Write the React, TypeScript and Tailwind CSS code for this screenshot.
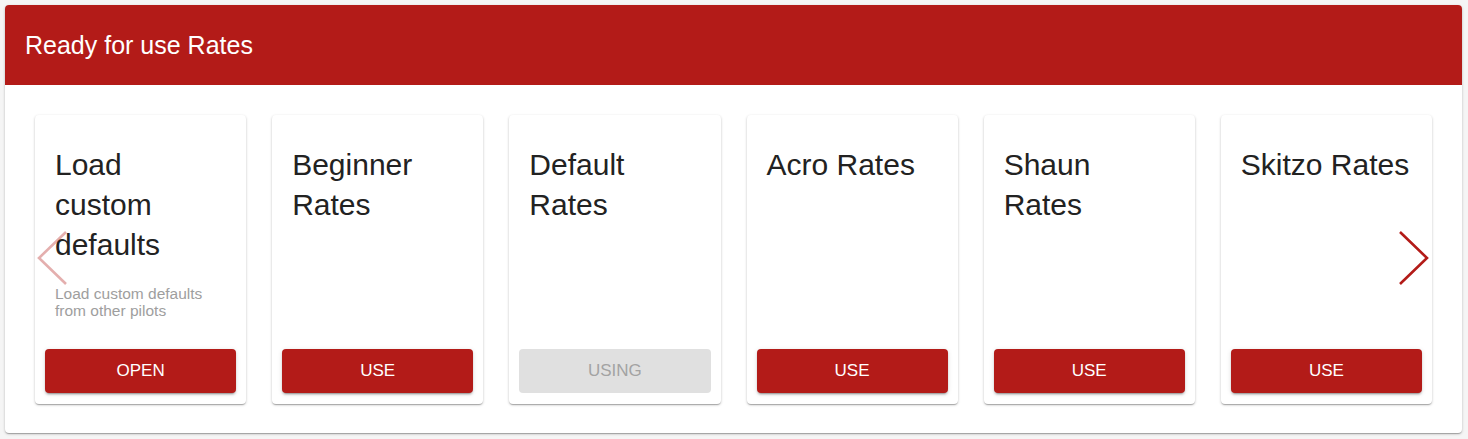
import React from "react";

type Item = { title: string; desc?: string; label: string; active?: boolean };

const items: Item[] = [
  { title: "Load custom defaults", desc: "Load custom defaults from other pilots", label: "OPEN" },
  { title: "Beginner Rates", label: "USE" },
  { title: "Default Rates", label: "USING", active: true },
  { title: "Acro Rates", label: "USE" },
  { title: "Shaun Rates", label: "USE" },
  { title: "Skitzo Rates", label: "USE" },
];

function Card({ item }: { item: Item }) {
  return (
    <div className="flex h-[289px] flex-col rounded-[4px] bg-white shadow-[0_1px_3px_rgba(0,0,0,0.2),0_1px_1px_rgba(0,0,0,0.14),0_2px_1px_-1px_rgba(0,0,0,0.12)]">
      <div className="flex-1 pl-[20px] pr-[22px] pt-[30px]">
        <div className="text-[30px] leading-[40px] text-[#222]">{item.title}</div>
        {item.desc && (
          <div className="mt-[20px] text-[15.5px] leading-[17px] text-[#9e9e9e]">{item.desc}</div>
        )}
      </div>
      <div className="px-[10px] pb-[11px]">
        {item.active ? (
          <div className="flex h-[44px] items-center justify-center rounded-[4px] bg-[#e0e0e0] text-[17px] text-[#a3a3a3]">
            {item.label}
          </div>
        ) : (
          <div className="flex h-[44px] items-center justify-center rounded-[4px] bg-[#b31b18] text-[17px] text-white shadow-[0_3px_1px_-2px_rgba(0,0,0,0.2),0_2px_2px_0_rgba(0,0,0,0.14),0_1px_5px_0_rgba(0,0,0,0.12)]">
            {item.label}
          </div>
        )}
      </div>
    </div>
  );
}

export default function App() {
  return (
    <div
      className="h-[439px] w-[1468px] bg-[#f5f5f5] pt-[5px]"
      style={{ fontFamily: '"Liberation Sans", Arial, sans-serif' }}
    >
      <div className="ml-[5px] w-[1457px] overflow-hidden rounded-[4px] bg-white shadow-[0_1px_3px_rgba(0,0,0,0.2),0_1px_1px_rgba(0,0,0,0.14),0_2px_1px_-1px_rgba(0,0,0,0.12)]">
        <div className="flex h-[80px] items-center bg-[#b31b18] px-[20px] pt-[1px] text-[25px] text-white">
          Ready for use Rates
        </div>
        <div className="relative px-[30px] pb-[29px] pt-[30px]">
          <div className="grid grid-cols-6 gap-[26px]">
            {items.map((it) => (
              <Card key={it.title} item={it} />
            ))}
          </div>
          <svg
            className="absolute left-[28px] top-[144px]"
            width="36"
            height="58"
            viewBox="0 0 36 58"
            fill="none"
          >
            <path d="M33 3 L6 29 L33 55" stroke="#b31b18" strokeOpacity="0.35" strokeWidth="2.6" />
          </svg>
          <svg
            className="absolute left-[1392px] top-[144px]"
            width="36"
            height="58"
            viewBox="0 0 36 58"
            fill="none"
          >
            <path d="M3 3 L30 29 L3 55" stroke="#b31b18" strokeWidth="2.6" />
          </svg>
        </div>
      </div>
    </div>
  );
}
